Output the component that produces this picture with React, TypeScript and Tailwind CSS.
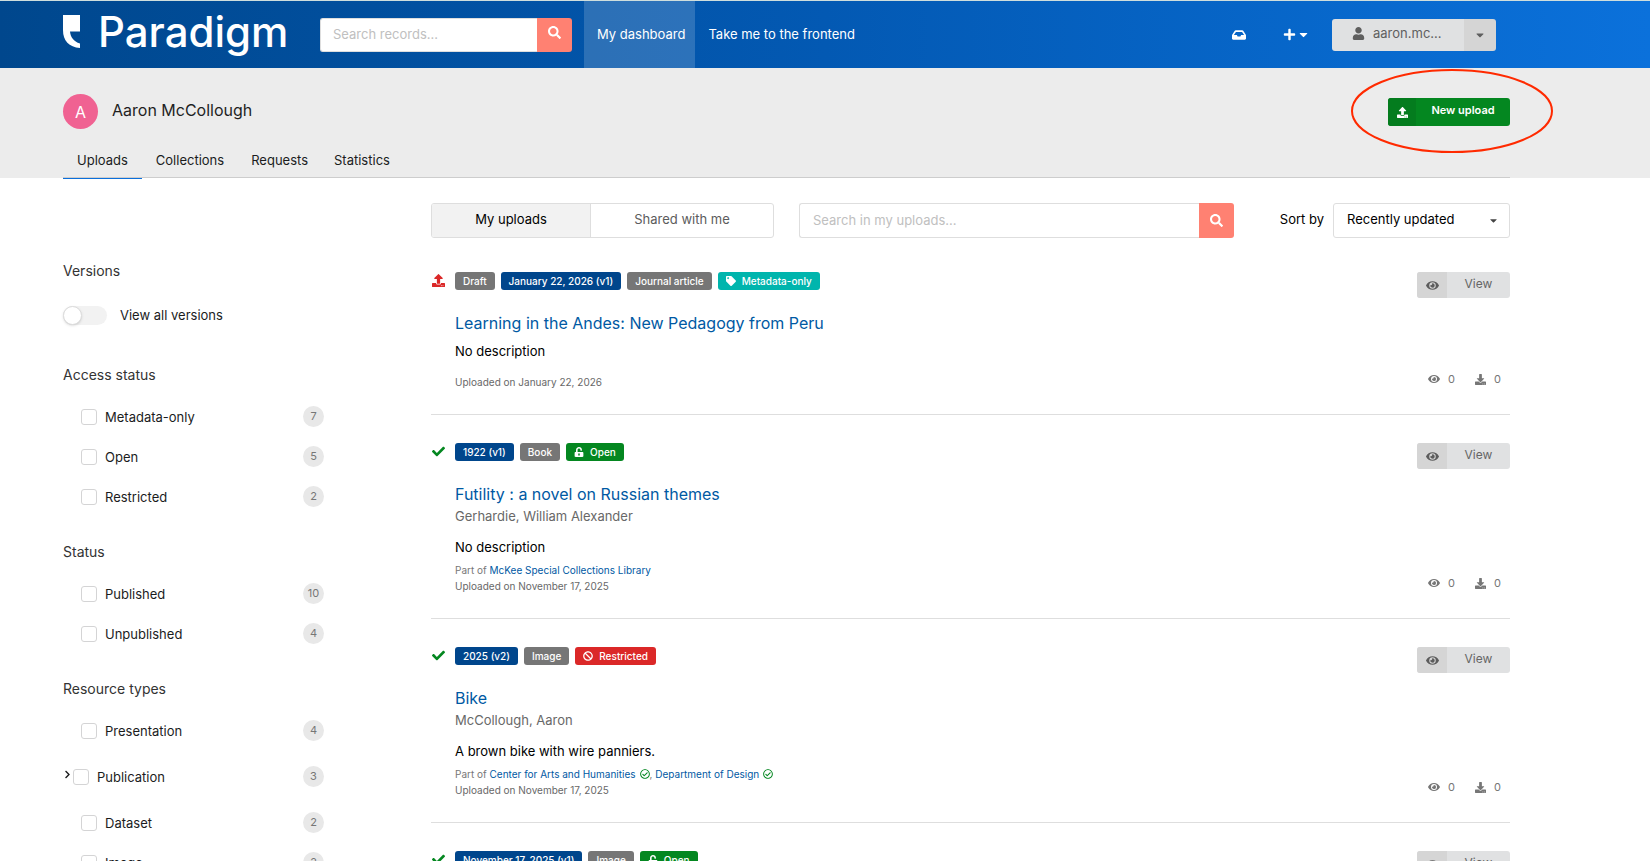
import type { ReactNode } from "react";
import {
  FaBan,
  FaCaretDown,
  FaCheck,
  FaChevronRight,
  FaDownload,
  FaEye,
  FaInbox,
  FaPlus,
  FaRegCheckCircle,
  FaSearch,
  FaTag,
  FaUnlockAlt,
  FaUpload,
  FaUser,
} from "react-icons/fa";

type Upload = {
  status: "draft" | "published";
  date: string;
  type: string;
  access: "metadata" | "open" | "restricted";
  title: string;
  authors?: string;
  description: string;
  communities: { name: string; verified?: boolean }[];
  uploaded: string;
};

const uploads: Upload[] = [
  {
    status: "draft",
    date: "January 22, 2026 (v1)",
    type: "Journal article",
    access: "metadata",
    title: "Learning in the Andes: New Pedagogy from Peru",
    description: "No description",
    communities: [],
    uploaded: "January 22, 2026",
  },
  {
    status: "published",
    date: "1922 (v1)",
    type: "Book",
    access: "open",
    title: "Futility : a novel on Russian themes",
    authors: "Gerhardie, William Alexander",
    description: "No description",
    communities: [{ name: "McKee Special Collections Library" }],
    uploaded: "November 17, 2025",
  },
  {
    status: "published",
    date: "2025 (v2)",
    type: "Image",
    access: "restricted",
    title: "Bike",
    authors: "McCollough, Aaron",
    description: "A brown bike with wire panniers.",
    communities: [
      { name: "Center for Arts and Humanities", verified: true },
      { name: "Department of Design", verified: true },
    ],
    uploaded: "November 17, 2025",
  },
  {
    status: "published",
    date: "November 17, 2025 (v1)",
    type: "Image",
    access: "open",
    title: "",
    description: "",
    communities: [],
    uploaded: "",
  },
];

const accessBadges = {
  metadata: { label: "Metadata-only", color: "bg-[#00b5ad]", icon: <FaTag size={10} /> },
  open: { label: "Open", color: "bg-[#048720]", icon: <FaUnlockAlt size={10} /> },
  restricted: { label: "Restricted", color: "bg-[#db2828]", icon: <FaBan size={10} /> },
};

function Badge({ color, icon, children }: { color: string; icon?: ReactNode; children: ReactNode }) {
  return (
    <span
      className={`flex h-[18px] items-center rounded-[3px] px-2 pb-px text-[10px] leading-none font-medium text-white ${color}`}
    >
      {icon && <span className="mr-1.5">{icon}</span>}
      {children}
    </span>
  );
}

function UploadItem({ item }: { item: Upload }) {
  const access = accessBadges[item.access];
  return (
    <li className="flex border-b border-[#dedede] pt-7 pb-6 first:pt-[34px]">
      <div className="w-6 shrink-0 pt-[2px] pl-px">
        {item.status === "draft" ? (
          <FaUpload size={13} className="text-[#db2828]" />
        ) : (
          <FaCheck size={13} className="text-[#048720]" />
        )}
      </div>

      <div className="min-w-0 flex-1">
        <div className="flex flex-wrap gap-1.5">
          {item.status === "draft" && <Badge color="bg-[#767676]">Draft</Badge>}
          <Badge color="bg-[#00468c]">{item.date}</Badge>
          <Badge color="bg-[#767676]">{item.type}</Badge>
          <Badge color={access.color} icon={access.icon}>
            {access.label}
          </Badge>
        </div>
        {item.title && (
          <h2 className="mt-[21px] text-base leading-6 text-[#0059a3]">
            <a href="#">{item.title}</a>
          </h2>
        )}
        {item.authors && <p className="text-[13px] leading-5 text-[#686868]">{item.authors}</p>}
        {item.description && (
          <p className={`text-[13px] leading-5 text-black ${item.authors ? "mt-[11px]" : "mt-1.5"}`}>
            {item.description}
          </p>
        )}
        {item.uploaded && (
          <div className={`text-[10px] leading-4 text-[#686868] ${item.authors ? "mt-[5px]" : "mt-[13px]"}`}>
            {item.communities.length > 0 && (
              <p className="text-[#777]">
                Part of{" "}
                {item.communities.map((community, i) => (
                  <span key={community.name}>
                    {i > 0 && ", "}
                    <a href="#" className="text-[#0059a3]">
                      {community.name}
                    </a>
                    {community.verified && (
                      <FaRegCheckCircle size={10} className="ml-1 inline align-[-1px] text-[#048720]" />
                    )}
                  </span>
                ))}
              </p>
            )}
            <p>Uploaded on {item.uploaded}</p>
          </div>
        )}
      </div>

      <div className="flex shrink-0 flex-col items-end justify-between">
        <button className="flex h-[26px] overflow-hidden rounded-[3px] bg-[#e0e1e2] text-xs text-[#666]">
          <span className="flex h-full w-[30px] items-center justify-center bg-[#d5d5d5] text-[#5c5c5c]">
            <FaEye size={13} />
          </span>
          <span className="w-[63px] text-center leading-6">View</span>
        </button>
        {item.uploaded && (
          <div className="mr-[9px] mb-[3px] flex gap-5 text-[11px] leading-4 text-[#767676]">
            <span className="flex items-center gap-2">
              <FaEye size={12} />0
            </span>
            <span className="flex items-center gap-2">
              <FaDownload size={11} />0
            </span>
          </div>
        )}
      </div>
    </li>
  );
}

function Facet({ label, count, nested }: { label: string; count: number; nested?: boolean }) {
  return (
    <li className={`flex items-center ${nested ? "my-1.5" : "pl-[18px]"}`}>
      {nested && (
        <button aria-label={`Expand ${label}`} className="w-2.5 pb-1 text-[#1b1c1d]">
          <FaChevronRight size={9} />
        </button>
      )}
      <label className="flex flex-1 items-center gap-2 text-[13px] leading-5 text-[#1b1c1d]">
        <input type="checkbox" className="size-4 appearance-none rounded-[3px] border border-[#d4d4d5] bg-white" />
        {label}
      </label>
      <span className="flex h-[21px] min-w-[21px] items-center justify-center rounded-full bg-[#e8e8e8] pb-px text-[11px] text-[#767676]">
        {count}
      </span>
    </li>
  );
}

function FacetGroup({ title, children }: { title: string; children: ReactNode }) {
  return (
    <section className="mb-[35px]">
      <h2 className="mb-[21px] text-sm leading-5 text-[#333]">{title}</h2>
      <ul className="flex flex-col gap-[19px]">{children}</ul>
    </section>
  );
}

function Header() {
  return (
    <header className="border-t border-[#cfdedd]">
      <div className="flex h-[67px] items-center bg-linear-to-r from-[#00478d] via-[#0359b3] to-[#0b71db] pr-[154px] pl-[63px]">
        <a href="#" className="flex w-[257px] items-center pb-1.5 text-white">
          <svg width="17" height="34" viewBox="0 0 17 34" className="mr-[18px]" fill="currentColor">
            <path d="M0 0H17V16.500H7C7.500 22 10.500 26.500 17 28.500V33C6 32 0 26 0 15Z" />
          </svg>
          <span className="text-[42px] leading-[50px] font-medium">Paradigm</span>
        </a>
        <form className="flex h-[34px] w-[252px]">
          <input
            type="text"
            aria-label="Search records"
            placeholder="Search records..."
            className="min-w-0 flex-1 rounded-l-[3px] border border-r-0 border-[#dedede] bg-white px-3 text-[13px] placeholder:text-[#c0c0c0]"
          />
          <button
            type="button"
            aria-label="Search"
            className="flex w-[35px] items-center justify-center rounded-r-[3px] bg-[#ff8172] pb-1 text-white"
          >
            <FaSearch size={13} />
          </button>
        </form>
        <nav className="ml-3 flex h-full text-[13px] text-white">
          <a href="#" className="flex items-center bg-white/17 pr-2.5 pl-[13px]">
            My dashboard
          </a>
          <a href="#" className="flex items-center px-[13px]">
            Take me to the frontend
          </a>
        </nav>
        <div className="ml-auto flex items-center text-white">
          <button aria-label="Inbox" className="mr-[37px]">
            <FaInbox size={14} />
          </button>
          <button aria-label="Create" className="mr-[22px] flex items-center gap-px">
            <FaPlus size={13} />
            <FaCaretDown size={13} />
          </button>
          <div className="flex h-8 overflow-hidden rounded-[3px] text-[#5f5f5f]">
            <button className="flex w-[132px] items-center gap-2 bg-[#e0e1e2] pb-0.5 pl-5 text-[13px]">
              <FaUser size={13} />
              aaron.mc...
            </button>
            <button aria-label="Account menu" className="flex w-8 items-center justify-center bg-[#d5d5d5]">
              <FaCaretDown size={12} />
            </button>
          </div>
        </div>
      </div>
    </header>
  );
}

function DashboardHeader() {
  return (
    <div className="bg-[#ececec] pr-[140px] pl-[63px]">
      <div className="flex h-[110px] flex-col justify-between border-b border-[#cdcdcd]">
        <div className="flex items-start justify-between">
          <div className="mt-[26px] flex items-center gap-3.5">
            <span className="flex size-[35px] items-center justify-center rounded-full bg-[#f06292] text-base text-white">
              A
            </span>
            <h1 className="pb-1 text-base text-[#1f1f1f]">Aaron McCollough</h1>
          </div>
          <div className="relative mt-[30px]">
            <button className="flex h-7 overflow-hidden rounded-[3px] bg-[#048720] text-[11px] font-semibold text-white">
              <span className="flex h-full w-7 items-center justify-center bg-[#047c1e]">
                <FaUpload size={11} />
              </span>
              <span className="w-[94px] text-center leading-6">New upload</span>
            </button>
            {/* highlight around the upload button */}
            <svg
              className="pointer-events-none absolute -top-[30px] -left-[38px]"
              width="204"
              height="86"
              viewBox="0 0 204 86"
              fill="none"
            >
              <ellipse cx="102" cy="43" rx="100" ry="41" stroke="#ff2a00" strokeWidth="2" />
            </svg>
          </div>
        </div>
        <nav className="-mb-[2px] flex text-[13px] text-[#1b1c1d]">
          <a href="#" className="border-b border-[#0b6fdb] px-3.5 pb-2 leading-5">
            Uploads
          </a>
          <a href="#" className="px-3.5 leading-5">
            Collections
          </a>
          <a href="#" className="px-[13px] leading-5">
            Requests
          </a>
          <a href="#" className="px-[13px] leading-5">
            Statistics
          </a>
        </nav>
      </div>
    </div>
  );
}

export default function App() {
  return (
    <div className="min-h-screen bg-white font-['Inter',sans-serif] text-[#1b1c1d]">
      <Header />
      <DashboardHeader />

      <div className="flex gap-[107px] pt-[25px] pr-[140px] pl-[63px]">
        <aside className="w-[261px] shrink-0 pt-[58px]">
          <section className="mb-10">
            <h2 className="mb-6 text-sm leading-5 text-[#333]">Versions</h2>
            <label className="flex items-center gap-[13px] text-[13px] leading-5">
              <input
                type="checkbox"
                role="switch"
                className="h-[19px] w-11 appearance-none rounded-full bg-[#f2f2f2] before:block before:size-[19px] before:rounded-full before:border before:border-[#dcdcdc] before:bg-white before:shadow-sm"
              />
              View all versions
            </label>
          </section>
          <FacetGroup title="Access status">
            <Facet label="Metadata-only" count={7} />
            <Facet label="Open" count={5} />
            <Facet label="Restricted" count={2} />
          </FacetGroup>
          <FacetGroup title="Status">
            <Facet label="Published" count={10} />
            <Facet label="Unpublished" count={4} />
          </FacetGroup>
          <FacetGroup title="Resource types">
            <Facet label="Presentation" count={4} />
            <Facet label="Publication" count={3} nested />
            <Facet label="Dataset" count={2} />
            <Facet label="Image" count={2} />
          </FacetGroup>
        </aside>

        <main className="min-w-0 flex-1">
          <div className="flex h-[35px] text-[13px]">
            <div className="flex w-[343px] overflow-hidden rounded-[3px] border border-[#dedede]">
              <button className="w-[159px] border-r border-[#dedede] bg-[#f2f2f2] pb-0.5 text-black">My uploads</button>
              <button className="flex-1 pb-0.5 text-[#5c5c5c]">Shared with me</button>
            </div>
            <form className="ml-[25px] flex min-w-0 flex-1">
              <input
                type="text"
                aria-label="Search in my uploads"
                placeholder="Search in my uploads..."
                className="min-w-0 flex-1 rounded-l-[3px] border border-r-0 border-[#dedede] px-[13px] placeholder:text-[#c0c0c0]"
              />
              <button
                type="button"
                aria-label="Search"
                className="flex w-[35px] items-center justify-center rounded-r-[3px] bg-[#ff8172] text-white"
              >
                <FaSearch size={13} />
              </button>
            </form>
            <label htmlFor="sort" className="ml-[46px] pr-[9px] leading-8 text-black">
              Sort by
            </label>
            <div className="relative w-[177px]">
              <select
                id="sort"
                className="h-full w-full appearance-none rounded-[3px] border border-[#dedede] bg-white pb-0.5 pl-[13px] text-black"
              >
                <option>Recently updated</option>
              </select>
              <FaCaretDown size={11} className="pointer-events-none absolute top-3 right-[11px] text-[#444]" />
            </div>
          </div>
          <ul>
            {uploads.map((item) => (
              <UploadItem key={item.title + item.date} item={item} />
            ))}
          </ul>
        </main>
      </div>
    </div>
  );
}
